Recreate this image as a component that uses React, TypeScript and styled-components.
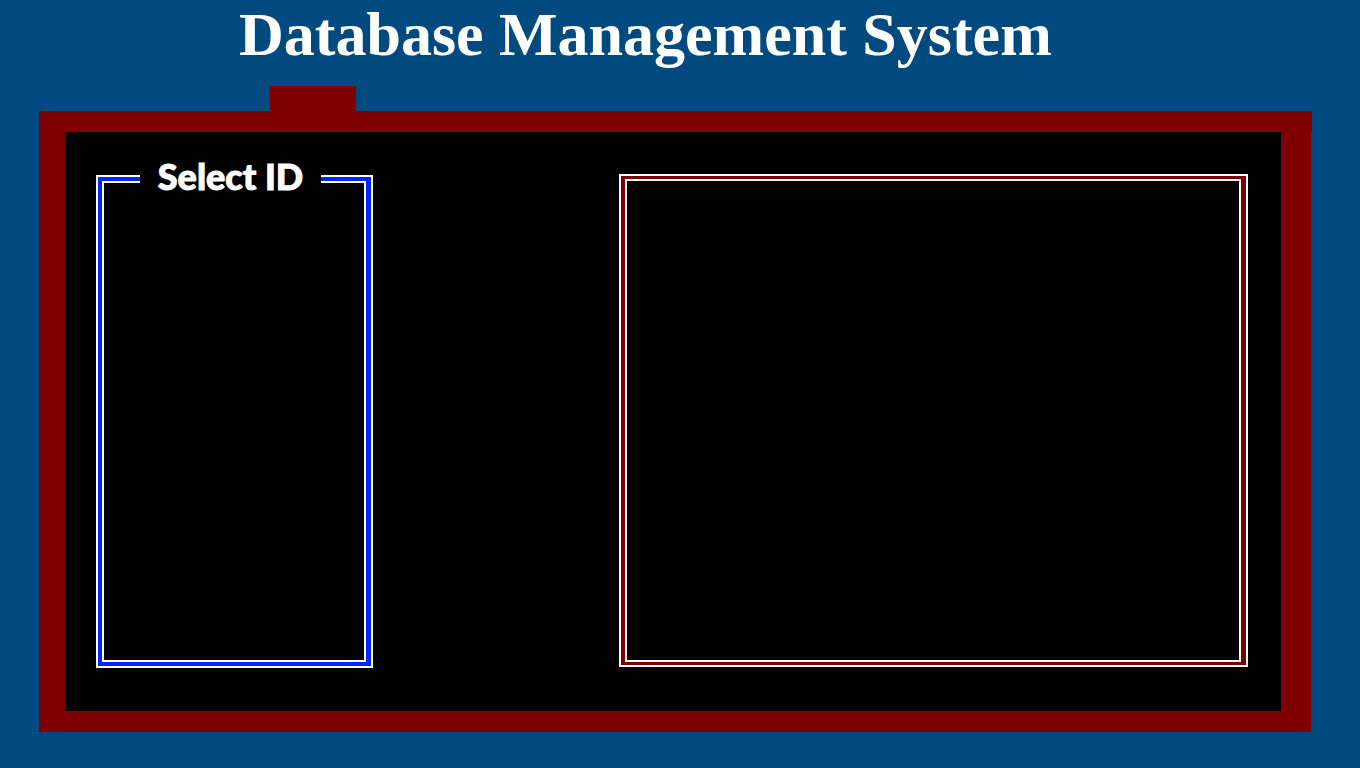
import React from "react";
import styled, { createGlobalStyle } from "styled-components";

const GlobalStyle = createGlobalStyle`
  *, *::before, *::after { box-sizing: border-box; }
  body { margin: 0; background: #004a7f; }
`;

const Page = styled.div`
  display: flex;
  flex-direction: column;
  min-height: 100vh;
  padding: 0 49px 36px 39px;
  background: #004a7f;
`;

const Header = styled.header`
  height: 86px;
  padding-left: 200px;
`;

const Title = styled.h1`
  margin: 0;
  color: #fff;
  font-family: "Old English Text MT", "Liberation Serif", serif;
  font-size: 62px;
  font-weight: 700;
  line-height: 68px;
  white-space: nowrap;
`;

const Tab = styled.div`
  width: 86px;
  height: 25px;
  margin-left: 231px;
  background: #7f0000;
`;

const TopBar = styled.div`
  height: 21px;
  margin-right: -1px;
  background: #7f0000;
`;

const Frame = styled.main`
  flex: 1;
  display: grid;
  grid-template-columns: 277fr 629fr;
  column-gap: 246px;
  min-height: 320px;
  padding: 42px 33px 43px 31px;
  border: solid #7f0000;
  border-width: 0 30px 21px 26px;
  background: #000;
`;

const Panel = styled.section<{ $color: string; $rails: string; $margin: string }>`
  position: relative;
  display: flex;
  margin: ${(p) => p.$margin};
  padding: ${(p) => p.$rails};
  border: 2px solid #fff;
  background: ${(p) => p.$color};
`;

const PanelBody = styled.div`
  flex: 1;
  border: 2px solid #fff;
  background: #000;
`;

const Legend = styled.h2`
  position: absolute;
  top: -22px;
  left: 42px;
  width: 181px;
  margin: 0;
  background: #000;
  color: #fff;
  font-family: "Bauhaus 93", Lato, sans-serif;
  font-size: 36px;
  font-weight: 900;
  line-height: 42px;
  text-align: center;
  white-space: nowrap;
  -webkit-text-stroke: 1px #fff;
`;

export default function App() {
  return (
    <>
      <GlobalStyle />
      <Page>
        <Header>
          <Title>Database Management System</Title>
        </Header>
        <Tab />
        <TopBar />
        <Frame>
          <Panel $color="#0026ff" $rails="4px 5px 4px 4px" $margin="1px 0 0" aria-labelledby="select-id">
            <Legend id="select-id">Select ID</Legend>
            <PanelBody />
          </Panel>
          <Panel $color="#7f0000" $rails="3px 5px 3px 4px" $margin="0 0 1px" aria-label="Details">
            <PanelBody />
          </Panel>
        </Frame>
      </Page>
    </>
  );
}
